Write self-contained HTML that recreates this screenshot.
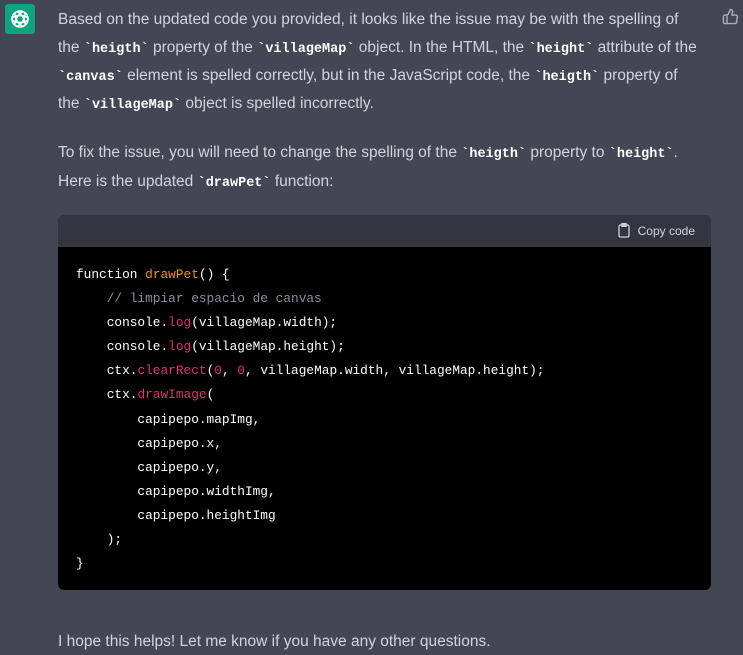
<!DOCTYPE html>
<html><head><style>
body{margin:0;width:743px;height:655px;background:#444654;overflow:hidden;position:relative;font-family:"Liberation Sans",sans-serif;color:#d1d5db}
.l{position:absolute;left:58px;font-size:15.5px;white-space:nowrap;line-height:20px}
code{font-family:"Liberation Mono",monospace;font-weight:bold;color:#fff;font-size:13.5px}
.cb{position:absolute;left:58px;top:215px;width:653px;height:375px;background:#000;border-radius:6px;overflow:hidden}
.hd{height:32px;background:#343541;position:relative}
.cp{position:absolute;right:16px;top:8px;font-size:12px;color:#d1d5db}
.c{position:absolute;left:18px;font-family:"Liberation Mono",monospace;font-size:12.8px;color:#fff;white-space:pre;line-height:24.1px}
.o{color:#e9950c}.p{color:#df3079}.g{color:#8e8ea0}
</style></head><body>
<div style="position:absolute;left:5px;top:4px;width:30px;height:30px;background:#10a37f;border-radius:3px">
<svg width="30" height="30" viewBox="0 0 30 30" fill="none" stroke="#fff" stroke-width="1.6"><circle cx="15" cy="15" r="8"/><ellipse cx="15" cy="15" rx="8" ry="3.5" transform="rotate(60 15 15)"/><ellipse cx="15" cy="15" rx="8" ry="3.5" transform="rotate(-60 15 15)"/><ellipse cx="15" cy="15" rx="8" ry="3.5"/></svg></div>
<svg style="position:absolute;left:722px;top:8px" width="17" height="17" viewBox="0 0 24 24" fill="none" stroke="#acacbe" stroke-width="2"><path d="M7 10v12M15 5.9L14 10h5.8a2 2 0 0 1 2 2.3l-1.4 8A2 2 0 0 1 18.5 22H4a2 2 0 0 1-2-2v-8a2 2 0 0 1 2-2h2.8a2 2 0 0 0 1.8-1.1L12 2a3.1 3.1 0 0 1 3 3.9z"/></svg>
<div class="l" style="top:10px">Based on the updated code you provided, it looks like the issue may be with the spelling of</div>
<div class="l" style="top:38px">the <code>`heigth`</code> property of the <code>`villageMap`</code> object. In the HTML, the <code>`height`</code> attribute of the</div>
<div class="l" style="top:66px"><code>`canvas`</code> element is spelled correctly, but in the JavaScript code, the <code>`heigth`</code> property of</div>
<div class="l" style="top:94px">the <code>`villageMap`</code> object is spelled incorrectly.</div>
<div class="l" style="top:143px">To fix the issue, you will need to change the spelling of the <code>`heigth`</code> property to <code>`height`</code>.</div>
<div class="l" style="top:172px">Here is the updated <code>`drawPet`</code> function:</div>
<div class="cb"><div class="hd"><div class="cp"><svg width="12" height="15" viewBox="0 0 12 15" fill="none" stroke="#d1d5db" stroke-width="1.3" style="vertical-align:-3px;margin-right:8px"><rect x="1" y="2" width="10" height="12" rx="1.5"/><rect x="3.5" y="0.7" width="5" height="2.6" rx="0.8"/></svg>Copy code</div></div>
<div class="c" style="top:48px">function <span class="o">drawPet</span>() {
    <span class="g">// limpiar espacio de canvas</span>
    console.<span class="p">log</span>(villageMap.width);
    console.<span class="p">log</span>(villageMap.height);
    ctx.<span class="p">clearRect</span>(<span class="p">0</span>, <span class="p">0</span>, villageMap.width, villageMap.height);
    ctx.<span class="p">drawImage</span>(
        capipepo.mapImg,
        capipepo.x,
        capipepo.y,
        capipepo.widthImg,
        capipepo.heightImg
    );
}</div></div>
<div class="l" style="top:632px">I hope this helps! Let me know if you have any other questions.</div>
</body></html>
